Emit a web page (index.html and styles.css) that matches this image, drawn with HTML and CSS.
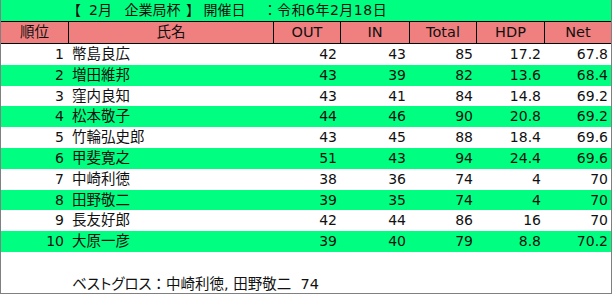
FILE: index.html
```html
<!DOCTYPE html>
<html lang="ja">
<head>
<meta charset="utf-8">
<title>2月 企業局杯</title>
<link rel="stylesheet" href="styles.css">
</head>
<body>
<div class="sheet">
  <div class="title"><span class="t t1">【</span><span class="t t2">2月</span><span class="t t3">企業局杯</span><span class="t t4">】</span><span class="t t5">開催日</span><span class="t t6">：</span><span class="t t7">令和6年2月18日</span></div>
  <div class="row head">
    <div class="c">順位</div>
    <div class="c">氏名</div>
    <div class="c">OUT</div>
    <div class="c">IN</div>
    <div class="c">Total</div>
    <div class="c">HDP</div>
    <div class="c">Net</div>
  </div>
  <div class="rows">
    <div class="row w"><div class="n">1</div><div class="name">幣島良広</div><div class="n">42</div><div class="n">43</div><div class="n">85</div><div class="n">17.2</div><div class="n">67.8</div></div>
    <div class="row g"><div class="n">2</div><div class="name">増田維邦</div><div class="n">43</div><div class="n">39</div><div class="n">82</div><div class="n">13.6</div><div class="n">68.4</div></div>
    <div class="row w"><div class="n">3</div><div class="name">窪内良知</div><div class="n">43</div><div class="n">41</div><div class="n">84</div><div class="n">14.8</div><div class="n">69.2</div></div>
    <div class="row g"><div class="n">4</div><div class="name">松本敬子</div><div class="n">44</div><div class="n">46</div><div class="n">90</div><div class="n">20.8</div><div class="n">69.2</div></div>
    <div class="row w"><div class="n">5</div><div class="name">竹輪弘史郎</div><div class="n">43</div><div class="n">45</div><div class="n">88</div><div class="n">18.4</div><div class="n">69.6</div></div>
    <div class="row g"><div class="n">6</div><div class="name">甲斐寛之</div><div class="n">51</div><div class="n">43</div><div class="n">94</div><div class="n">24.4</div><div class="n">69.6</div></div>
    <div class="row w"><div class="n">7</div><div class="name">中崎利徳</div><div class="n">38</div><div class="n">36</div><div class="n">74</div><div class="n">4</div><div class="n">70</div></div>
    <div class="row g"><div class="n">8</div><div class="name">田野敬二</div><div class="n">39</div><div class="n">35</div><div class="n">74</div><div class="n">4</div><div class="n">70</div></div>
    <div class="row w"><div class="n">9</div><div class="name">長友好郎</div><div class="n">42</div><div class="n">44</div><div class="n">86</div><div class="n">16</div><div class="n">70</div></div>
    <div class="row g"><div class="n">10</div><div class="name">大原一彦</div><div class="n">39</div><div class="n">40</div><div class="n">79</div><div class="n">8.8</div><div class="n">70.2</div></div>
  </div>
  <div class="foot"><span class="kana">ベストグロス</span>：中崎利徳, 田野敬二&nbsp;&nbsp;74</div>
</div>
</body>
</html>
```
FILE: styles.css
```css
html, body {
  margin: 0;
  padding: 0;
  background: #ffffff;
}
.sheet {
  width: 612px;
  height: 294px;
  box-sizing: border-box;
  border: 1px solid #808080;
  border-top: none;
  font-family: "DejaVu Sans", "Noto Sans CJK JP", sans-serif;
  font-size: 14px;
  color: #111111;
  overflow: hidden;
}
.title {
  display: flex;
  height: 21px;
  line-height: 21px;
  background: #00ff80;
  border-bottom: 1px solid #000;
  padding-left: 66px;
  font-size: 14px;
  white-space: nowrap;
}
.t { flex: none; }
.t1 { width: 22px; }
.t2 { width: 35.5px; }
.t3 { width: 61.5px; }
.t4 { width: 17.5px; }
.t5 { width: 59.5px; }
.t6 { width: 14px; }
.t7 { letter-spacing: 0.5px; }
.row {
  display: grid;
  grid-template-columns: 68px 205px 67px 69px 67px 68px 66px;
}
.head {
  height: 21px;
  background: #f08080;
  border-bottom: 1px solid #000;
}
.head .c {
  box-sizing: border-box;
  border-right: 1px solid #000;
  text-align: center;
  line-height: 20px;
  font-size: 14.5px;
}
.head .c:last-child {
  border-right: none;
}
.rows .row {
  height: 20.8px;
  line-height: 20px;
}
.row.w { background: #ffffff; }
.row.g { background: #00ff80; }
.n {
  text-align: right;
  padding-right: 4px;
}
.row .n:last-child {
  padding-right: 3px;
}
.row .n:first-child {
  padding-right: 5px;
}
.name {
  padding-left: 3px;
  font-size: 14.5px;
}
.foot {
  padding: 22px 0 0 71px;
  line-height: 20px;
  font-size: 14.5px;
}
.kana {
  font-feature-settings: "palt";
}
```
